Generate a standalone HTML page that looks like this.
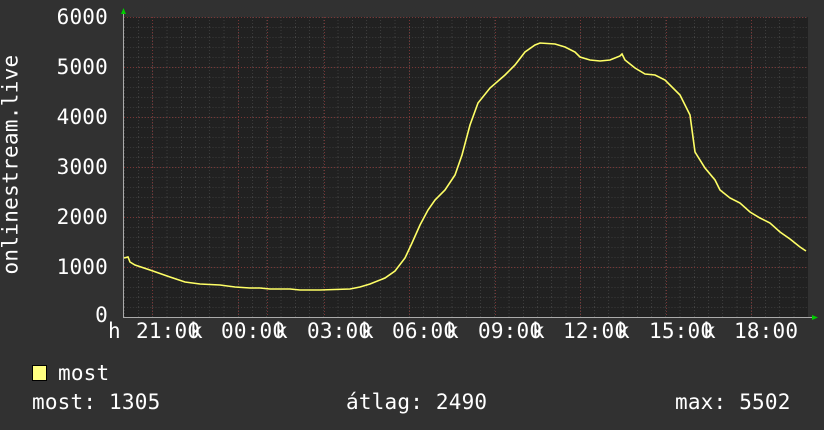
<!DOCTYPE html><html><head><style>
body{margin:0;width:824px;height:430px;background:#313131;overflow:hidden;font-family:"DejaVu Sans Mono","Liberation Mono",monospace;color:#fff}
.t{position:absolute;font-size:21px;line-height:21px;white-space:pre;letter-spacing:0.2px}
.r{text-align:right;width:80px}
</style></head><body>
<svg width="824" height="430" style="position:absolute;left:0;top:0">
<defs>
<pattern id="gx" width="14.25" height="10" patternUnits="userSpaceOnUse" x="124" y="17">
<path d="M0 0V10M0 0H14.25" stroke="#555" stroke-width="1" stroke-dasharray="1,2" fill="none"/>
</pattern>
</defs>
<rect x="124" y="17" width="684" height="300" fill="#212121"/>
<rect x="124" y="17" width="684" height="300" fill="url(#gx)"/>
<g stroke="#7a3535" stroke-dasharray="1,2" stroke-width="1">
<line x1="124" y1="17.5" x2="808" y2="17.5"/><line x1="124" y1="67.5" x2="808" y2="67.5"/>
<line x1="124" y1="117.5" x2="808" y2="117.5"/><line x1="124" y1="167.5" x2="808" y2="167.5"/>
<line x1="124" y1="217.5" x2="808" y2="217.5"/><line x1="124" y1="267.5" x2="808" y2="267.5"/>
<line x1="152.5" y1="17" x2="152.5" y2="317"/><line x1="238.5" y1="17" x2="238.5" y2="317"/>
<line x1="267.5" y1="17" x2="267.5" y2="317"/><line x1="324.5" y1="17" x2="324.5" y2="317"/>
<line x1="409.5" y1="17" x2="409.5" y2="317"/><line x1="495.5" y1="17" x2="495.5" y2="317"/>
<line x1="580.5" y1="17" x2="580.5" y2="317"/><line x1="666.5" y1="17" x2="666.5" y2="317"/>
<line x1="751.5" y1="17" x2="751.5" y2="317"/>
</g>
<line x1="124" y1="317.5" x2="812" y2="317.5" stroke="#aaa"/>
<line x1="123.5" y1="13" x2="123.5" y2="318" stroke="#aaa"/>
<polygon points="121,14 126,14 123.5,8" fill="#0c0"/>
<polygon points="812,315 812,320 818,317.5" fill="#0c0"/>
<polyline fill="none" stroke="#ffff66" stroke-width="1.6" points="124,258 128,257 130,262 135,265 150,270 170,277 185,282 200,284 220,285 235,287 250,288 260,288 270,289 290,289 300,290 320,290 350,289 360,287 370,284 385,278 395,271 405,258 412,243 420,225 428,210 435,200 445,190 455,175 462,155 470,125 478,103 490,88 505,75 515,65 525,52 535,45 540,43 555,44 565,47 575,52 580,57 590,60 600,61 610,60 620,56 622,54 625,60 635,68 645,74 655,75 665,80 680,95 690,115 695,152 705,168 715,180 720,190 730,198 740,203 750,212 760,218 770,223 780,232 790,239 800,247 806,251"/>
<rect x="32.5" y="365.5" width="14" height="15" fill="#ffff80" stroke="#000" stroke-width="1"/>
</svg>
<div class="t r" style="left:28px;top:7px">6000</div>
<div class="t r" style="left:28px;top:57px">5000</div>
<div class="t r" style="left:28px;top:107px">4000</div>
<div class="t r" style="left:28px;top:157px">3000</div>
<div class="t r" style="left:28px;top:207px">2000</div>
<div class="t r" style="left:28px;top:257px">1000</div>
<div class="t r" style="left:28px;top:305px">0</div>
<div class="t" style="left:108px;top:321px">h</div>
<div class="t" style="left:136px;top:321px">21:00</div><div class="t" style="left:190px;top:321px">k</div>
<div class="t" style="left:221px;top:321px">00:00</div><div class="t" style="left:275px;top:321px">k</div>
<div class="t" style="left:307px;top:321px">03:00</div><div class="t" style="left:361px;top:321px">k</div>
<div class="t" style="left:392px;top:321px">06:00</div><div class="t" style="left:446px;top:321px">k</div>
<div class="t" style="left:478px;top:321px">09:00</div><div class="t" style="left:532px;top:321px">k</div>
<div class="t" style="left:563px;top:321px">12:00</div><div class="t" style="left:617px;top:321px">k</div>
<div class="t" style="left:649px;top:321px">15:00</div><div class="t" style="left:703px;top:321px">k</div>
<div class="t" style="left:734px;top:321px">18:00</div>
<div class="t" style="left:-104px;top:154px;transform:rotate(-90deg);width:230px;text-align:center;letter-spacing:0.3px">onlinestream.live</div>
<div class="t" style="left:58px;top:363px">most</div>
<div class="t" style="left:32px;top:392px">most: 1305</div>
<div class="t" style="left:346px;top:392px">átlag: 2490</div>
<div class="t" style="left:675px;top:392px">max: 5502</div>
</body></html>
